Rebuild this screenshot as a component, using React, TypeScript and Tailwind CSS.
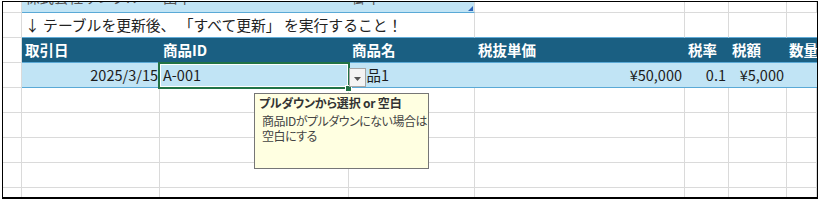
import React from "react";

// column widths in px (gridline included), A..G; H takes the rest
const cols = [19, 138, 189, 126, 210, 44, 58];

const grid = "border-r border-b border-[#dadada]";

function EmptyRow() {
  return (
    <div className="flex h-[25px] shrink-0">
      {cols.map((w, i) => (
        <div key={i} className={`h-full shrink-0 ${grid}`} style={{ width: w }} />
      ))}
      <div className={`h-full flex-1 ${grid}`} />
    </div>
  );
}

export default function App() {
  return (
    <div className="w-[821px] h-[201px] bg-white font-['Noto_Sans_CJK_JP','Noto_Sans',sans-serif] [text-spacing-trim:space-all]">
      <div className="relative ml-[2px] mt-[1px] flex h-[198px] w-[816px] flex-col overflow-hidden border border-b-2 border-black">
        {/* row 1 : the info table, scrolled so only its bottom shows */}
        <div className="mt-[-14px] flex h-[25px] shrink-0 text-[14.5px] text-[#555]">
          <div className={`w-[19px] shrink-0 ${grid}`} />
          <div className="flex w-[138px] shrink-0 items-center border-b border-[#5aa9d6] bg-[#c1e4f5] pl-[3px]">
            <span className="-translate-y-[3px]">株式会社サンプル</span>
          </div>
          <div className="flex w-[189px] shrink-0 items-center border-b border-[#5aa9d6] bg-[#c1e4f5] pl-[3px]">
            <span className="-translate-y-[3px]">田中</span>
          </div>
          <div className="relative flex w-[126px] shrink-0 items-center border-b border-r border-[#5aa9d6] border-r-[#dadada] bg-[#c1e4f5] pl-[3px]">
            <span className="-translate-y-[3px]">御中</span>
            <svg className="absolute bottom-[1px] right-[1px]" width="5" height="5" viewBox="0 0 5 5">
              <path d="M5 0 L5 5 L0 5 Z" fill="#2f63b8" />
            </svg>
          </div>
          <div className={`w-[210px] shrink-0 ${grid}`} />
          <div className={`w-[44px] shrink-0 ${grid}`} />
          <div className={`w-[58px] shrink-0 ${grid}`} />
          <div className={`flex-1 ${grid}`} />
        </div>

        {/* row 2 : note */}
        <div className="flex h-[25px] shrink-0 text-[14.8px] text-[#222]">
          <div className={`w-[19px] shrink-0 ${grid}`} />
          <div className="flex w-[453px] shrink-0 items-center whitespace-nowrap border-b border-r border-b-[#62acd8] border-r-[#dadada] pl-[3px]">
            ↓ テーブルを更新後、 「すべて更新」 を実行すること！
          </div>
          <div className="w-[210px] shrink-0 border-b border-r border-b-[#62acd8] border-r-[#dadada]" />
          <div className="w-[44px] shrink-0 border-b border-r border-b-[#62acd8] border-r-[#dadada]" />
          <div className="w-[58px] shrink-0 border-b border-r border-b-[#62acd8] border-r-[#dadada]" />
          <div className="flex-1 border-b border-b-[#62acd8]" />
        </div>

        {/* header */}
        <div className="flex h-[25px] shrink-0 text-[14.5px] font-bold text-white">
          <div className={`w-[19px] shrink-0 ${grid}`} />
          <div className="flex flex-1 border-b border-[#5aa9d6] bg-[#1a5f82]">
            <div className="flex w-[138px] shrink-0 items-center pl-[3px]">取引日</div>
            <div className="flex w-[189px] shrink-0 items-center pl-[3px]">商品ID</div>
            <div className="flex w-[126px] shrink-0 items-center pl-[3px]">商品名</div>
            <div className="flex w-[210px] shrink-0 items-center pl-[3px]">税抜単価</div>
            <div className="flex w-[44px] shrink-0 items-center pl-[3px]">税率</div>
            <div className="flex w-[58px] shrink-0 items-center pl-[3px]">税額</div>
            <div className="flex flex-1 items-center whitespace-nowrap pl-[2px]">数量</div>
          </div>
        </div>

        {/* data row */}
        <div className="flex h-[25px] shrink-0 text-[14.5px] text-[#1c1c1c]">
          <div className={`w-[19px] shrink-0 ${grid}`} />
          <div className="flex flex-1 border-b border-[#5aa9d6] bg-[#c1e4f5]">
            <div className="flex w-[138px] shrink-0 items-center justify-end pr-[2px]">2025/3/15</div>
            <div className="flex w-[189px] shrink-0 items-center pl-[3px]">A-001</div>
            <div className="flex w-[126px] shrink-0 items-center pl-[3px]">商品1</div>
            <div className="flex w-[210px] shrink-0 items-center justify-end pr-[3px]">¥50,000</div>
            <div className="flex w-[44px] shrink-0 items-center justify-end pr-[3px]">0.1</div>
            <div className="flex w-[58px] shrink-0 items-center justify-end pr-[3px]">¥5,000</div>
            <div className="flex-1" />
          </div>
        </div>

        <EmptyRow />
        <EmptyRow />
        <EmptyRow />
        <EmptyRow />
        <EmptyRow />

        {/* active cell */}
        <div className="absolute left-[155px] top-[60px] h-[27px] w-[192px] border-2 border-[#217346] shadow-[inset_0_0_0_1px_#ffffff]" />
        <div className="absolute left-[342px] top-[83px] h-[7px] w-[7px] border border-white bg-[#217346]" />

        {/* dropdown button */}
        <div className="absolute left-[346px] top-[66px] flex h-[19px] w-[17px] items-center justify-center border border-[#a6a6a6] bg-[#f4f4f4]">
          <svg width="7" height="4" viewBox="0 0 7 4" className="mt-[2px]">
            <path d="M0 0 L7 0 L3.5 4 Z" fill="#555555" />
          </svg>
        </div>

        {/* input message */}
        <div className="absolute left-[251px] top-[91px] h-[76px] w-[175px] border border-[#767676] bg-[#ffffe1] px-[4px] pt-[1px] text-[12px] [font-feature-settings:'palt']">
          <div className="whitespace-nowrap font-bold leading-[16px] tracking-[-0.2px] text-[#333]">プルダウンから選択 or 空白</div>
          <div className="mt-[2px] whitespace-nowrap pl-[3px] leading-[15px] tracking-[-0.5px] text-[#444]">
            商品IDがプルダウンにない場合は
            <br />
            空白にする
          </div>
        </div>
      </div>
    </div>
  );
}
